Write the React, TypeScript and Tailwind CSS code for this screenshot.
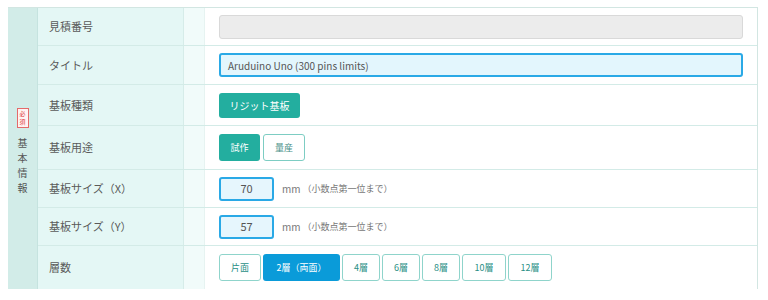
import { ReactNode } from "react"

const font = { fontFamily: '"Noto Sans CJK JP", "Noto Sans", sans-serif' }

const Row = ({ label, h, children, last }: { label: string; h: string; children?: ReactNode; last?: boolean }) => (
  <div className={`flex ${h} ${last ? "" : "border-b border-[#d3ebe7]"}`}>
    <div className="w-[146px] shrink-0 bg-[#e4f7f5] border-r border-[#d6ece9] flex items-center pl-[11px] text-[11px] text-[#5a5a5a]">
      {label}
    </div>
    <div className="w-[21px] shrink-0 bg-[#f1fbfa] border-r border-[#e6f3f1]" />
    <div className="flex-1 flex items-center pl-[14px] pr-[14px] bg-white">{children}</div>
  </div>
)

const SizeInput = ({ value }: { value: string }) => (
  <div className="flex items-center">
    <div className="w-[55px] h-[24px] rounded-[3px] border-2 border-[#2aa9e6] bg-[#e6f6fd] flex items-center justify-center text-[11px] text-[#555]">
      {value}
    </div>
    <span className="ml-[8px] text-[10px] text-[#777]">mm</span>
    <span className="ml-[2px] text-[9px] text-[#777]">（小数点第一位まで）</span>
  </div>
)

const layers = [
  { t: "片面", w: "w-[42px]" },
  { t: "2層（両面）", w: "w-[77px]", on: true },
  { t: "4層", w: "w-[38px]" },
  { t: "6層", w: "w-[38px]" },
  { t: "8層", w: "w-[38px]" },
  { t: "10層", w: "w-[44px]" },
  { t: "12層", w: "w-[44px]" },
]

export default function App() {
  return (
    <div className="w-[768px] h-[300px] bg-white pt-[7px] pl-[8px]" style={font}>
      <div className="flex w-[750px] border-t border-[#d2e6e2] border-r border-[#b8dbd6]">
        <div className="w-[30px] shrink-0 bg-[#d2ece8] border-r border-[#c5e3df] flex flex-col items-center pt-[100px]">
          <div className="w-[12px] h-[20px] border border-[#e46a6a] bg-[#fff3f3] flex flex-col items-center justify-center text-[6px] leading-[8px] text-[#d33]">
            <span>必</span>
            <span>須</span>
          </div>
          <div className="mt-[7px] flex flex-col items-center text-[10px] leading-[15px] text-[#555]">
            <span>基</span>
            <span>本</span>
            <span>情</span>
            <span>報</span>
          </div>
        </div>
        <div className="flex-1 flex flex-col">
          <Row label="見積番号" h="h-[38px]">
            <div className="w-full h-[24px] rounded-[3px] border border-[#d9d9d9] bg-[#ececec]" />
          </Row>
          <Row label="タイトル" h="h-[39px]">
            <div className="w-full h-[24px] rounded-[3px] border-2 border-[#2aa9e6] bg-[#e3f6fd] flex items-center pl-[7px] text-[10px] text-[#555]">
              Aruduino Uno (300 pins limits)
            </div>
          </Row>
          <Row label="基板種類" h="h-[41px]">
            <div className="w-[81px] h-[25px] rounded-[3px] bg-[#23ae9f] text-white text-[10px] flex items-center justify-center">
              リジット基板
            </div>
          </Row>
          <Row label="基板用途" h="h-[44px]">
            <div className="flex gap-[3px]">
              <div className="w-[41px] h-[27px] rounded-[3px] bg-[#23ae9f] text-white text-[9px] flex items-center justify-center">
                試作
              </div>
              <div className="w-[42px] h-[27px] rounded-[3px] border border-[#7dcdc3] bg-white text-[#4a8f88] text-[9px] flex items-center justify-center">
                量産
              </div>
            </div>
          </Row>
          <Row label="基板サイズ（X）" h="h-[38px]">
            <SizeInput value="70" />
          </Row>
          <Row label="基板サイズ（Y）" h="h-[38px]">
            <SizeInput value="57" />
          </Row>
          <Row label="層数" h="h-[43px]" last>
            <div className="flex gap-[2px]">
              {layers.map((l) => (
                <div
                  key={l.t}
                  className={`${l.w} h-[27px] rounded-[3px] text-[9px] flex items-center justify-center ${
                    l.on ? "bg-[#0a9bd9] text-white" : "border border-[#8fd4cb] bg-white text-[#2a8f86]"
                  }`}
                >
                  {l.t}
                </div>
              ))}
            </div>
          </Row>
        </div>
      </div>
    </div>
  )
}
